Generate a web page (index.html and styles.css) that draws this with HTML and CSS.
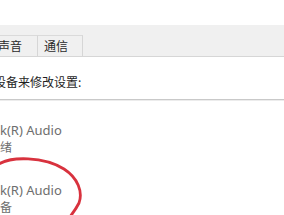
FILE: index.html
```html
<!DOCTYPE html>
<html lang="zh">
<head>
<meta charset="utf-8">
<link rel="stylesheet" href="styles.css">
</head>
<body>
<div class="page">
  <div class="top"></div>
  <div class="tabstrip">
    <div class="tab tab-first">声音</div>
    <div class="tab tab-second">通信</div>
  </div>
  <div class="content">
    <p class="hint">设备来修改设置:</p>
    <div class="list">
      <div class="device">
        <div class="name">k(R) Audio</div>
        <div class="status">绪</div>
      </div>
      <div class="device">
        <div class="name">k(R) Audio</div>
        <div class="status">备</div>
      </div>
    </div>
  </div>
  <svg class="mark" width="284" height="215" viewBox="0 0 284 215">
    <path d="M -4 166 C 10 155, 45 157, 64 169 C 78 178, 83 192, 79 203 C 76 209, 73 213, 69 218" fill="none" stroke="#d8323e" stroke-width="2.8" stroke-linecap="round"/>
  </svg>
</div>
</body>
</html>
```
FILE: styles.css
```css
html, body {
  margin: 0;
  padding: 0;
  background: #ffffff;
}
.page {
  position: relative;
  width: 284px;
  height: 215px;
  overflow: hidden;
  font-family: "Noto Sans", "Noto Sans CJK SC", sans-serif;
}
.top {
  height: 25px;
}
.tabstrip {
  height: 31px;
  background: #f0f0f0;
  border-bottom: 1px solid #d6d6d6;
  display: flex;
  align-items: flex-end;
  margin-left: -2px;
}
.tab {
  height: 20px;
  border-top: 1px solid #dadada;
  border-right: 1px solid #d6d6d6;
  font-family: "Noto Sans CJK SC", sans-serif;
  font-size: 12px;
  line-height: 20px;
  color: #2a2a2a;
  background: #f0f0f0;
}
.tab-first {
  padding: 0 15px 0 0;
}
.tab-second {
  padding: 0 14px 0 6px;
}
.content {
  padding-top: 16px;
}
.hint {
  margin: 0 0 0 -6px;
  font-family: "Noto Sans CJK SC", sans-serif;
  font-size: 12px;
  line-height: 17px;
  color: #1e1e1e;
  white-space: nowrap;
}
.list {
  margin-top: 9px;
  border-top: 1px solid #c9c9c9;
  box-shadow: inset 0 1px 0 #ececec;
  padding-top: 22px;
}
.device {
  height: 60px;
}
.name {
  font-size: 13px;
  line-height: 17px;
  color: #6e6e6e;
  white-space: nowrap;
}
.status {
  font-family: "Noto Sans CJK SC", sans-serif;
  font-size: 12px;
  line-height: 16px;
  color: #6e6e6e;
}
.mark {
  position: absolute;
  left: 0;
  top: 0;
}
```
